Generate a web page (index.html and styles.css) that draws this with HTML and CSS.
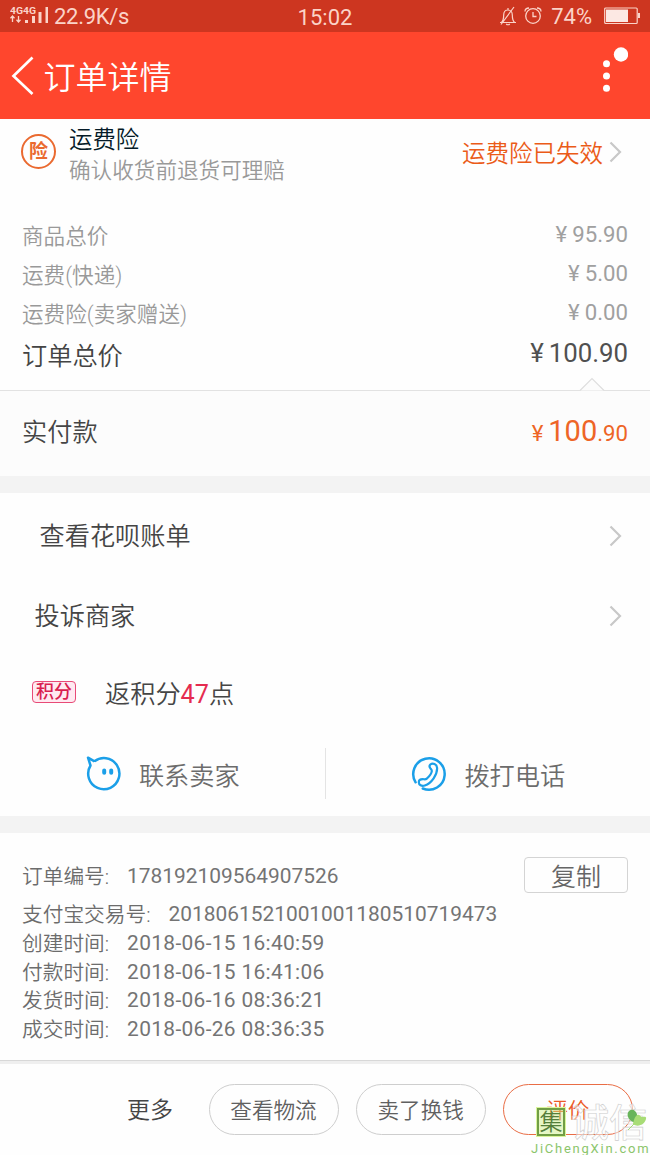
FILE: index.html
```html
<!DOCTYPE html>
<html lang="zh-CN">
<head>
<meta charset="utf-8">
<title>订单详情</title>
<link rel="stylesheet" href="styles.css">
</head>
<body>
<div class="status">
  <svg class="signal" width="40" height="18" viewBox="0 0 40 18"><text x="0" y="6.5" textLength="26" lengthAdjust="spacingAndGlyphs">4G4G</text><path d="M2.5 9v6M0.5 11.2l2-2.2 2 2.2M8.500 9v6M6.500 12.800l2 2.200 2-2.200" fill="none" stroke="#fbd3c8" stroke-width="1.300"/><path d="M15 13h3v3h-3zM22 9h3v7h-3zM28.500 5h3v11h-3zM35.500 0h2.500v16h-2.500z" fill="#fbd3c8"/></svg>
  <span class="speed">22.9K/s</span>
  <span class="clock">15:02</span>
  <span class="status-right">
    <svg width="18" height="20" viewBox="0 0 18 20" fill="none" stroke="#fbd3c8" stroke-width="1.200"><path d="M1 16.500h16M2.500 16.500c2-2 2.200-4 2.200-7.500 0-3 1.700-5 4.300-5s4.300 2 4.300 5c0 3.500.2 5.500 2.200 7.500M9 4V2M7.200 18c1 1 2.600 1 3.600 0M15 1L2 18.500"/></svg>
    <svg width="18" height="20" viewBox="0 0 18 20" fill="none" stroke="#fbd3c8" stroke-width="1.300"><circle cx="9" cy="10" r="7.300"/><path d="M9 6v4.500h3.500M1 5.500C1 3 2.500 2 5 2M17 5.500C17 3 15.500 2 13 2"/></svg>
    <span class="percent">74%</span>
    <svg width="36" height="18" viewBox="0 0 36 18"><rect x=".7" y="1" width="32.500" height="15.500" rx="1" fill="none" stroke="#fbd3c8" stroke-width="1.200"/><path d="M2 2.500h22v12.500H2z" fill="#fce8e3"/><path d="M34 6h2v5h-2z" fill="#fbd3c8"/></svg>
  </span>
</div>
<header class="header">
  <svg class="back" width="24" height="40" viewBox="0 0 24 40"><path d="M21.500 1.500L2.500 20l19 18" fill="none" stroke="#fff" stroke-width="2.700"/></svg>
  <h1>订单详情</h1>
  <svg class="more" width="28" height="46" viewBox="0 0 28 46" fill="#fff"><circle cx="21" cy="7.500" r="7.200"/><circle cx="6.500" cy="16.800" r="3.500"/><circle cx="6.500" cy="28.900" r="3.500"/><circle cx="6.500" cy="41.200" r="3.500"/></svg>
</header>
<section class="insurance">
  <span class="badge">险</span>
  <div class="ins-text"><div class="ins-title">运费险</div><div class="ins-sub">确认收货前退货可理赔</div></div>
  <span class="ins-state">运费险已失效</span>
  <svg class="chev" width="13" height="22" viewBox="0 0 13 22"><path d="M1.500 1.500L11 11l-9.500 9.500"/></svg>
</section>
<section class="prices">
  <div class="price"><span>商品总价</span><span class="num"><i>¥</i>95.90</span></div>
  <div class="price"><span>运费(快递)</span><span class="num"><i>¥</i>5.00</span></div>
  <div class="price"><span>运费险(卖家赠送)</span><span class="num"><i>¥</i>0.00</span></div>
  <div class="price total"><span>订单总价</span><span class="num"><i>¥</i>100.90</span></div>
</section>
<section class="paid">
  <svg class="notch" width="26" height="14" viewBox="0 0 26 14"><path d="M1 13.500L13 1.500l12 12" fill="#fcfcfc" stroke="#dedede" stroke-width="1.200"/></svg>
  <span>实付款</span><span class="pay"><i>¥</i><b>100</b>.90</span>
</section>
<div class="gap"></div>
<section class="links">
  <div class="link bill"><span>查看花呗账单</span><svg class="chev" width="13" height="22" viewBox="0 0 13 22"><path d="M1.500 1.500L11 11l-9.500 9.500"/></svg></div>
  <div class="link complain"><span>投诉商家</span><svg class="chev" width="13" height="22" viewBox="0 0 13 22"><path d="M1.500 1.500L11 11l-9.500 9.500"/></svg></div>
  <div class="points"><span class="tag">积分</span><span>返积分<em>47</em>点</span></div>
  <div class="contacts">
    <div class="contact">
      <svg width="36" height="36" viewBox="0 0 36 36" fill="none" stroke="#1b9fe8" stroke-width="2.500"><path d="M8.500 5.300C12 2.600 16 1.700 20 2.200a15.600 15.600 0 1 1-15.500 7.300L2 1.700l6.500 3.600" stroke-linejoin="round"/><path d="M18.200 14.500v2.300M25.200 14.500v2.300" stroke-width="4" stroke-linecap="round"/></svg>
      <span>联系卖家</span>
    </div>
    <div class="contact">
      <svg width="36" height="36" viewBox="0 0 36 36" fill="none" stroke="#1b9fe8" stroke-width="2.500" stroke-linecap="round" stroke-linejoin="round"><path d="M4.600 26.300A15.700 15.700 0 1 1 11.800 32.500"/><path d="M19.300 8.500c2.500-2 6.500-.5 6.800 3.300.4 6.500-5.500 15.500-12.300 17.700-3.300 1-6-.7-6-3.300 0-2 2-3 4-3 1.800 0 2.800.5 4-.6 1.800-1.500 4.700-5.300 5-7.400.2-1.300-.7-2-1.500-3-.9-1.200-1-2.700 0-3.700z" stroke-width="2.200"/></svg>
      <span>拨打电话</span>
    </div>
  </div>
</section>
<div class="gap"></div>
<section class="order">
  <div class="row first"><span>订单编号:</span><span class="val">178192109564907526</span><button class="copy">复制</button></div>
  <div class="row"><span>支付宝交易号:</span><span class="val">2018061521001001180510719473</span></div>
  <div class="row"><span>创建时间:</span><span class="val date">2018-06-15 16:40:59</span></div>
  <div class="row"><span>付款时间:</span><span class="val date">2018-06-15 16:41:06</span></div>
  <div class="row"><span>发货时间:</span><span class="val date">2018-06-16 08:36:21</span></div>
  <div class="row"><span>成交时间:</span><span class="val date">2018-06-26 08:36:35</span></div>
</section>
<footer class="actions">
  <span class="more-text">更多</span>
  <button class="pill">查看物流</button>
  <button class="pill">卖了换钱</button>
  <button class="pill primary">评价</button>
  <div class="watermark">
    <div class="mark-row"><span class="seal">集</span><span class="mark-name">诚信</span></div>
    <svg class="leaf" width="22" height="22" viewBox="0 0 22 22"><path d="M1 8C-1 2 5-1 8 2c3 3 3 7 1 12-4-1-7-3-8-6z" fill="#68b45a"/><path d="M6 15C7 10 9 5 12 6c2 .5 1.500 2 3 2s5-1 4 2c-1 5-8 9-13 5z" fill="#a8dc76"/><path d="M7 15l-6 6" stroke="#a8dc76" stroke-width="1"/></svg>
    <div class="site">JiChengXin.com</div>
  </div>
</footer>
</body>
</html>
```

FILE: styles.css
```css
* { box-sizing: border-box; }
body { margin: 0; width: 650px; height: 1155px; overflow: hidden; background: #fefefe; color: #454545; font-family: Roboto, "Noto Sans CJK SC", sans-serif; font-weight: 350; }
i, em { font-style: normal; }
svg { flex: none; display: block; }
.status { position: relative; height: 32px; background: #cd3620; color: #fbd3c8; display: flex; align-items: center; padding: 0 10px; font-size: 22px; font-weight: 400; }
.signal text { font: bold 8.5px Roboto, sans-serif; fill: #fbd3c8; }
.speed { margin-left: 4px; letter-spacing: -0.3px; }
.clock { position: absolute; left: 0; top: 5px; width: 650px; text-align: center; }
.status-right { margin-left: auto; display: flex; align-items: center; gap: 7px; }
.percent { margin: 0 5px 0 2px; }
.header { height: 87px; background: #ff462d; display: flex; align-items: center; padding: 0 22px 0 11px; color: #fff; }
.back { margin-top: 1px; }
h1 { margin: 4px 0 0 8.5px; font-size: 32px; font-weight: inherit; line-height: 40px; }
.more { margin: -12px 0 0 auto; }
.insurance { height: 98px; padding: 7px 28px 0 21px; display: flex; align-items: flex-start; }
.badge { width: 35px; height: 35px; border: 2px solid #ea6a30; border-radius: 50%; margin-top: 8px; color: #ea6a30; font-size: 19px; font-weight: 700; line-height: 31px; text-align: center; }
.ins-text { margin-left: 13px; flex: 1; }
.ins-title { font-size: 23.4px; line-height: 28px; color: #051b28; }
.ins-sub { font-size: 21.6px; line-height: 34px; color: #999; }
.ins-state { font-size: 23.5px; line-height: 56px; color: #eb5b18; margin-right: 6px; }
.chev { fill: none; stroke: #c8c8c8; stroke-width: 2.2; }
.insurance .chev { margin-top: 15px; }
.prices { height: 173px; padding: 0 22px; font-size: 21.6px; color: #999; }
.price { height: 39px; line-height: 40px; display: flex; justify-content: space-between; }
.num { line-height: 35px; font-size: 22.2px; font-weight: 400; color: #a0a0a0; }
.num i { margin-right: 5px; }
.total { height: 44px; line-height: 45px; font-size: 25.2px; color: #444; }
.total .num { font-size: 25.8px; line-height: 39px; color: #505050; }
.paid { position: relative; height: 86px; border-top: 1px solid #e2e2e2; background: #fcfcfc; display: flex; justify-content: space-between; padding: 0 22px; font-size: 25.2px; line-height: 83px; }
.notch { position: absolute; left: 579px; top: -14px; }
.pay { color: #ee6526; font-size: 22.2px; font-weight: 400; line-height: 80px; }
.pay b { font-size: 29px; font-weight: inherit; }
.pay i { margin-right: 5px; }
.gap { height: 17px; background: #f3f3f3; }
.links { height: 323px; padding-top: 3px; font-size: 25.2px; }
.link { height: 80px; display: flex; align-items: center; justify-content: space-between; padding-right: 28px; line-height: 36px; }
.link span { margin-top: 2px; }
.bill { padding-left: 39.5px; }
.complain { padding-left: 34.5px; }
.points { height: 72px; display: flex; align-items: center; padding-left: 32px; }
.tag { width: 44px; height: 22px; border: 1.5px solid #e84a77; border-radius: 4px; background: #ffeaf1; color: #d91f50; font-size: 18px; font-weight: 500; line-height: 20px; text-align: center; margin-right: 29px; }
em { color: #e52c50; font-weight: 400; }
.contacts { margin-top: 20px; height: 51px; display: flex; color: #6c6c6c; }
.contact { flex: 1; display: flex; align-items: center; justify-content: center; gap: 17px; padding-left: 1px; }
.contact + .contact { border-left: 1px solid #e4e4e4; }
.order { height: 227px; padding: 24px 22px 0; font-size: 20.7px; color: #6c6c6c; }
.row { height: 28.8px; line-height: 30px; display: flex; }
.val { margin-left: 18px; font-size: 20.9px; font-weight: 400; line-height: 29px; color: #747474; }
.date { letter-spacing: 0.33px; }
.first { height: 43px; line-height: 40px; }
.first .val { line-height: 39px; }
.copy { margin: 0 0 0 auto; width: 104px; height: 36px; border: 1.5px solid #d4d4d4; border-radius: 4px; background: none; color: #666; font: inherit; font-size: 25px; line-height: 34px; padding: 3px 0 0; }
.actions { position: relative; height: 95px; border-top: 1px solid #d8d8d8; box-shadow: inset 0 3px #efefef; display: flex; align-items: flex-start; padding: 23px 17px 0 127px; }
.more-text { width: 81.500px; font-size: 23px; line-height: 54px; }
.pill { width: 130px; height: 51px; margin: 0 17.200px 0 0; border: 1px solid #cecece; border-radius: 26px; padding: 1px 0 0; background: none; color: #606060; font: inherit; font-size: 21.6px; line-height: 49px; flex: none; }
.pill.primary { border: 1.5px solid #e96d45; color: #eb5b28; margin-right: 0; }
.watermark { position: absolute; left: 531px; top: 46px; width: 119px; height: 49px; }
.mark-row { display: flex; }
.seal { margin: 1px 0 0 6px; width: 28px; height: 28px; border: 2px solid #719e45; outline: 1px solid #d9f59c; background: rgba(201, 240, 128, .45); color: #557f3b; font-size: 23px; line-height: 25px; text-align: center; }
.mark-name { margin-left: 6px; font-size: 38px; line-height: 33px; font-weight: 500; color: rgba(255, 255, 255, .5); -webkit-text-stroke: .6px #ccc; white-space: nowrap; }
.leaf { position: absolute; left: 96px; top: 2px; }
.site { position: absolute; left: 0; top: 34px; color: #8bc56b; font-size: 13px; font-weight: 400; line-height: 15px; letter-spacing: 1.75px; white-space: nowrap; }
```
